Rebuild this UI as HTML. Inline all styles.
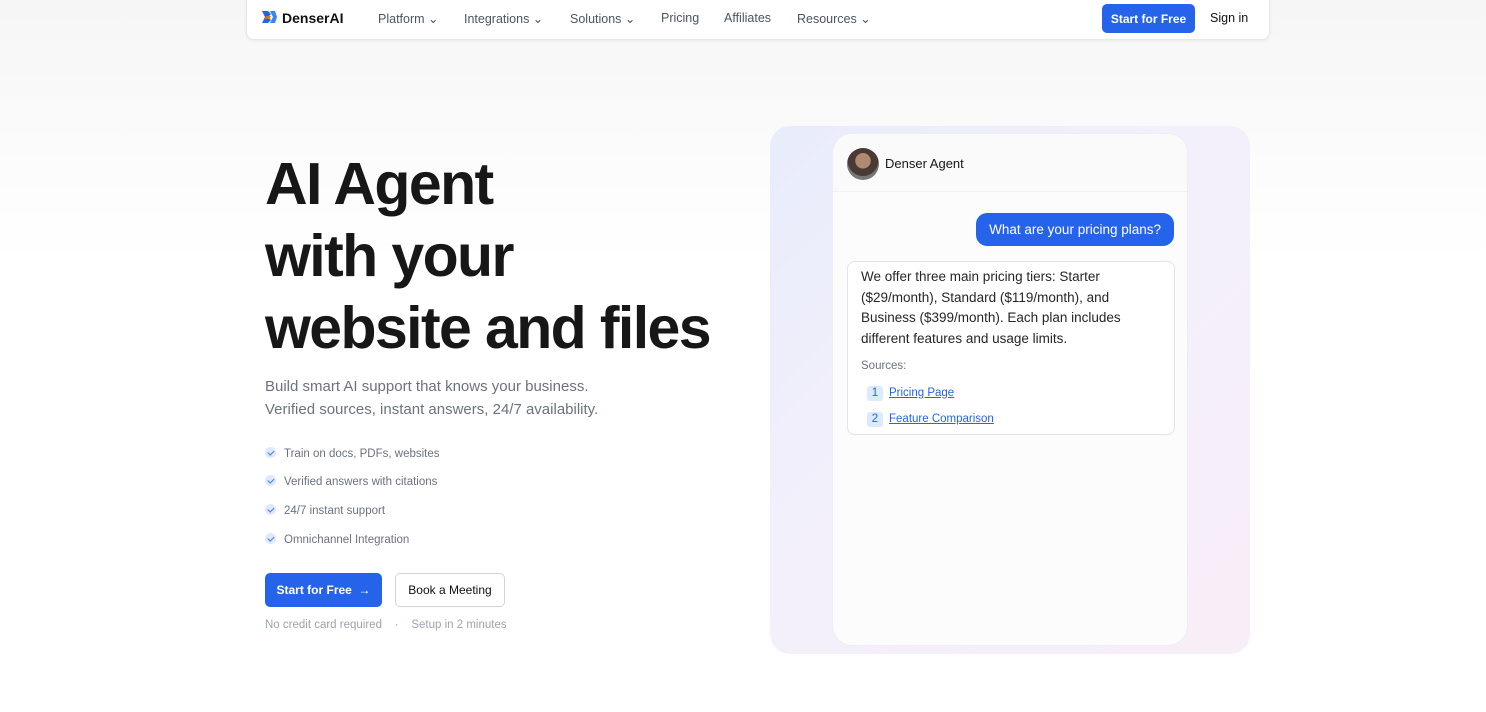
<!DOCTYPE html>
<html><head><meta charset="utf-8"><style>
*{margin:0;padding:0;box-sizing:border-box}
body{width:1486px;height:712px;overflow:hidden;background:#fff;font-family:"Liberation Sans",sans-serif;position:relative;color:#171717}
.bgtop{position:absolute;left:0;top:0;width:1486px;height:260px;background:linear-gradient(#f6f6f7,#fff)}
.nav{position:absolute;left:246px;top:-6px;width:1024px;height:46px;background:#fff;border:1px solid #e5e7eb;border-radius:8px;box-shadow:0 1px 3px rgba(0,0,0,.06)}
.nav span{position:absolute;top:16px;font-size:12.5px;color:#4b5563}
.logo{position:absolute;left:13px;top:13px}
.btn{position:absolute;background:#2563eb;color:#fff;border-radius:5px;font-weight:bold;font-size:12px;display:flex;align-items:center;justify-content:center}
h1{position:absolute;left:265px;top:148px;font-size:59px;line-height:72px;font-weight:bold;letter-spacing:-1.6px;color:#171717}
.sub{position:absolute;left:265px;top:375px;font-size:15px;line-height:23px;color:#6b7280}
.li{position:absolute;left:265px;font-size:11.5px;color:#6b7280}
.li i{display:inline-block;width:11px;height:11px;border-radius:50%;background:#e0e7ff;margin-right:8px;vertical-align:-1px;position:relative}
.li i:after{content:"";position:absolute;left:3.5px;top:2px;width:2.5px;height:5px;border:solid #3b82f6;border-width:0 1.2px 1.2px 0;transform:rotate(45deg)}
.panel{position:absolute;left:770px;top:126px;width:480px;height:528px;border-radius:20px;background:linear-gradient(135deg,#e8ecfb 0%,#f3f0fb 45%,#f8eef8 100%)}
.card{position:absolute;left:832px;top:133px;width:356px;height:513px;background:#fcfcfd;border:1px solid #eceef2;border-radius:20px;overflow:hidden}
.hd{height:58px;border-bottom:1px solid #f0f1f4;background:#fafafb}
.av{position:absolute;left:14px;top:14px;width:32px;height:32px;border-radius:50%;background:radial-gradient(circle at 50% 40%,#b08a70 0 30%,#4a3a35 32% 60%,#777 62%)}
.q{position:absolute;right:13px;top:79px;background:#2563eb;color:#fff;font-size:13.5px;padding:9px 13px;border-radius:11px}
.a{position:absolute;left:14px;top:127px;width:328px;height:174px;border:1px solid #e2e4e8;border-radius:8px;background:#fff;padding:5px 40px 8px 13px;font-size:13.5px;line-height:20.7px;color:#262626}
.src{font-size:11.5px;color:#6b7280;margin-top:6px}
.s{font-size:11.5px;margin-top:6px;margin-left:6px;line-height:20px}
.s b{display:inline-block;width:16px;height:15px;background:#dbeafe;color:#2563eb;border-radius:3px;text-align:center;font-weight:normal;line-height:15px;margin-right:6px}
.s u{color:#2563eb}
</style></head><body>
<div class="bgtop"></div>
<div class="nav">
<svg class="logo" width="18" height="18" viewBox="0 0 18 18" style="top:13px"><path d="M2 3h6l3 3-3 3 3 3-3 3H2l3-6z" fill="#2563eb"/><path d="M10 3h5l2 6-2 6h-5l3-6z" fill="#3b82f6"/><path d="M6 8h5l-2 3H5z" fill="#d97706"/></svg>
<span style="left:35px;top:15px;font-size:14px;font-weight:bold;color:#111">DenserAI</span>
<span style="left:131px">Platform ⌄</span>
<span style="left:217px">Integrations ⌄</span>
<span style="left:323px">Solutions ⌄</span>
<span style="left:414px">Pricing</span>
<span style="left:477px">Affiliates</span>
<span style="left:550px">Resources ⌄</span>
<div class="btn" style="left:855px;top:9px;width:93px;height:29px">Start for Free</div>
<span style="left:963px;color:#111">Sign in</span>
</div>
<h1>AI Agent<br>with your<br>website and files</h1>
<div class="sub">Build smart AI support that knows your business.<br>Verified sources, instant answers, 24/7 availability.</div>
<div class="li" style="top:447px"><i></i>Train on docs, PDFs, websites</div>
<div class="li" style="top:475px"><i></i>Verified answers with citations</div>
<div class="li" style="top:504px"><i></i>24/7 instant support</div>
<div class="li" style="top:533px"><i></i>Omnichannel Integration</div>
<div class="btn" style="left:265px;top:573px;width:117px;height:34px">Start for Free &nbsp;→</div>
<div style="position:absolute;left:395px;top:573px;width:110px;height:34px;border:1px solid #d1d5db;border-radius:5px;font-size:12px;display:flex;align-items:center;justify-content:center;color:#111">Book a Meeting</div>
<div style="position:absolute;left:265px;top:619px;font-size:11.5px;color:#9ca3af">No credit card required &nbsp;&nbsp;&nbsp;·&nbsp;&nbsp;&nbsp; Setup in 2 minutes</div>
<div class="panel"></div>
<div class="card">
<div class="hd"></div><div class="av"></div>
<div style="position:absolute;left:52px;top:22px;font-size:13px;color:#171717">Denser Agent</div>
<div class="q">What are your pricing plans?</div>
<div class="a">We offer three main pricing tiers: Starter ($29/month), Standard ($119/month), and Business ($399/month). Each plan includes different features and usage limits.
<div class="src">Sources:</div>
<div class="s"><b>1</b><u>Pricing Page</u></div>
<div class="s"><b>2</b><u>Feature Comparison</u></div>
</div>
</div>
</body></html>
